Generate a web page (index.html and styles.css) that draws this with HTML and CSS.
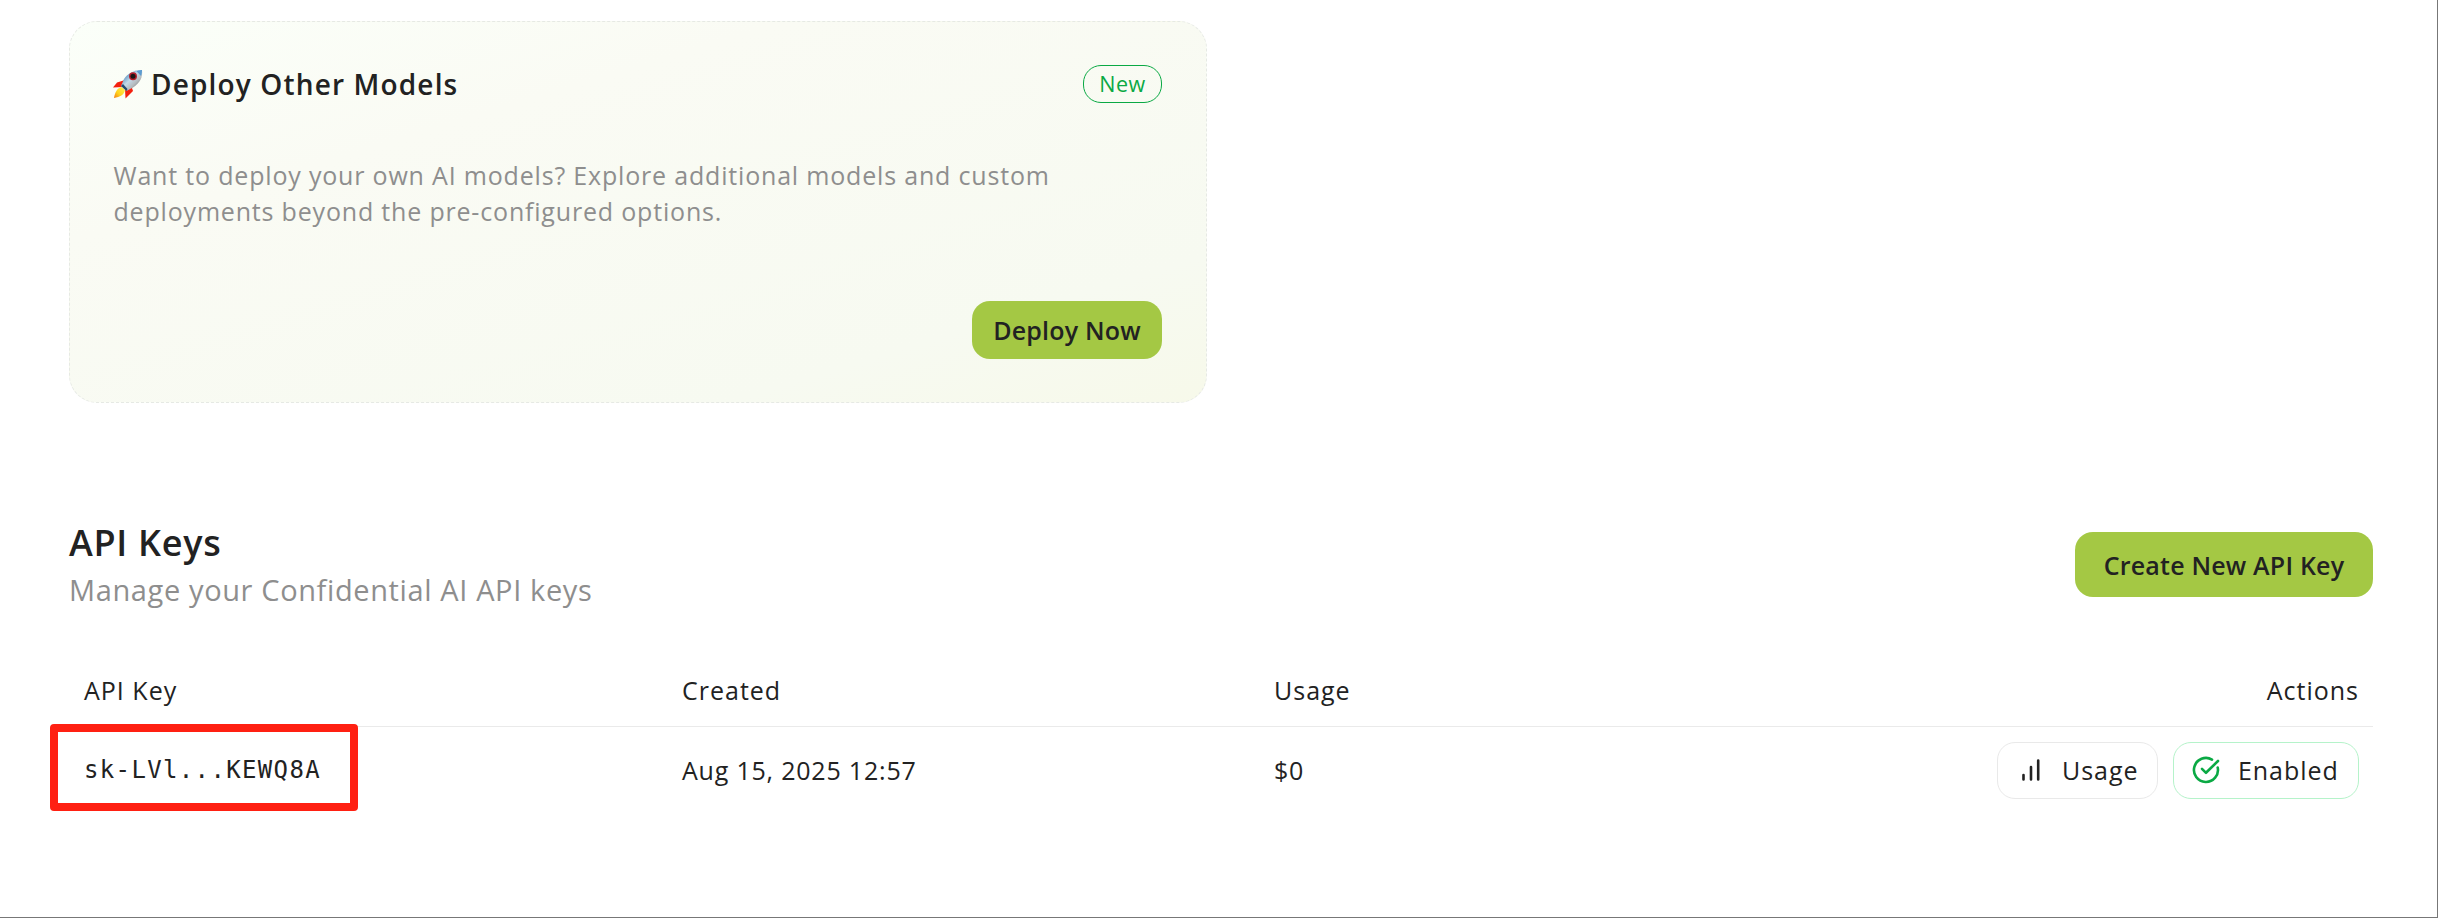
FILE: index.html
```html
<!DOCTYPE html>
<html lang="en">
<head>
<meta charset="utf-8">
<title>API Keys</title>
<link rel="stylesheet" href="styles.css">
</head>
<body>
<main class="page">
  <section class="deploy-card">
    <header class="card-head">
      <h2 class="card-title">
        <svg class="rocket" viewBox="0 0 30 30" aria-hidden="true">
          <defs>
            <linearGradient id="hull" x1="0" y1="0" x2="1" y2="1"><stop offset="0.15" stop-color="#3d7fb8"/><stop offset="0.45" stop-color="#c3d9e8"/><stop offset="0.65" stop-color="#b5babd"/><stop offset="0.9" stop-color="#596269"/></linearGradient>
            <linearGradient id="flame" x1="1" y1="0" x2="0" y2="1"><stop offset="0" stop-color="#ffef5a"/><stop offset="0.6" stop-color="#ffd21c"/><stop offset="1" stop-color="#f47a16"/></linearGradient>
          </defs>
          <path d="M12 11 4 13.500 0 18.500 10 18z" fill="#f3200f"/>
          <path d="M18 16 20 22 12.500 29.500 12 20z" fill="#f3200f"/>
          <path d="M9 18C4 19 2 23 1 29 7 28 11 26 12 21z" fill="url(#flame)"/>
          <path d="M29 1C22 0.500 15 4 11 10L8 17 13.500 22 20 18.500C27 14 30 8 29 1z" fill="url(#hull)"/>
          <path d="M8 17 13.500 22 14.500 20 10 15z" fill="#244a70"/>
          <path d="M23.500 2.200C26 1.200 28 1 29 1 29 3 28.800 5 28 7z" fill="#5b9bd0"/>
          <circle cx="20" cy="7.200" r="4" fill="#b51f2c"/>
          <circle cx="20" cy="7.200" r="2.500" fill="#1b1517"/>
        </svg>
        <span>Deploy Other Models</span>
      </h2>
      <span class="badge">New</span>
    </header>
    <p class="card-text">Want to deploy your own AI models? Explore additional models and custom<br>deployments beyond the pre-configured options.</p>
    <footer class="card-foot"><button class="btn btn-deploy">Deploy Now</button></footer>
  </section>

  <section class="keys">
    <header class="keys-head">
      <div>
        <h1 class="keys-title">API Keys</h1>
        <p class="keys-sub">Manage your Confidential AI API keys</p>
      </div>
      <button class="btn btn-create">Create New API Key</button>
    </header>
    <div class="table">
      <div class="row row-head">
        <span>API Key</span><span>Created</span><span>Usage</span><span class="right">Actions</span>
      </div>
      <div class="row row-body">
        <span class="key">sk-LVl...KEWQ8A</span>
        <span class="cell">Aug 15, 2025 12:57</span>
        <span class="cell">$0</span>
        <span class="actions">
          <button class="pill">
            <svg class="icon-bars" viewBox="0 0 18 22" aria-hidden="true"><path d="M1.500 16V20.500M9 8V20.500M16.200 1.500V20.500"/></svg>
            <span>Usage</span>
          </button>
          <button class="pill pill-on">
            <svg class="icon-check" viewBox="0 0 28 28" aria-hidden="true"><path d="M25.700 11.500A12 12 0 1 1 20 3.600M26 5 14 16.800 10 12.800"/></svg>
            <span>Enabled</span>
          </button>
        </span>
        <span class="highlight"></span>
      </div>
    </div>
  </section>
</main>
</body>
</html>
```
FILE: styles.css
```css
* { box-sizing: border-box; }
body { margin: 0; background: #fff; color: #222; font-family: "Open Sans", sans-serif; font-size: 25px; letter-spacing: 0.8px; }
h1, h2, p { margin: 0; font-weight: 400; }
button { font: inherit; letter-spacing: inherit; color: inherit; border: 0; background: none; padding: 0; }
.page { height: 918px; padding: 21px 64px 0 69px; border-right: 1px solid #777; border-bottom: 1px solid #777; overflow: hidden; }

.deploy-card { width: 1138px; height: 382px; padding: 43px 44px 43px 43px; border: 1px dashed #e6e9e4; border-radius: 28px; background: linear-gradient(163deg, #fbfff9 0%, #fafbf4 30%, #f7faf1 80%, #f7f9ea 100%); display: flex; flex-direction: column; }
.card-head { display: flex; justify-content: space-between; align-items: center; height: 38px; }
.card-title { display: flex; align-items: center; gap: 8px; font-size: 28px; line-height: 38px; font-weight: 600; letter-spacing: 1.150px; }
.rocket { width: 30px; height: 30px; }
.badge { width: 79px; height: 38px; border: 1px solid #0aa944; border-radius: 18px; color: #0aa944; font-size: 21.500px; font-weight: 500; line-height: 36px; text-align: center; letter-spacing: 0.6px; }
.card-text { margin-top: 54px; padding-left: 0.5px; color: #8e8e8e; line-height: 36px; letter-spacing: 0.815px; }
.card-foot { margin-top: auto; display: flex; justify-content: flex-end; }
.btn { background: #a4c844; border-radius: 18px; font-weight: 600; letter-spacing: 0.2px; }
.btn-deploy { width: 190px; height: 58px; }

.keys { margin-top: 117px; }
.keys-head { display: flex; justify-content: space-between; align-items: flex-start; height: 130px; }
.keys-title { font-size: 36px; font-weight: 600; line-height: 46px; letter-spacing: 0.7px; }
.keys-sub { font-size: 29px; line-height: 48px; color: #8e8e8e; letter-spacing: 0.620px; }
.btn-create { width: 298px; height: 65px; margin-top: 12px; }

.row { display: grid; grid-template-columns: 598px 592px 1fr 480px; padding: 0 14px 0 15px; align-items: center; position: relative; }
.row-head { height: 77px; padding-top: 3px; border-bottom: 1px solid #eaeaea; font-weight: 500; letter-spacing: 1px; }
.row-body { height: 88px; }
.right { text-align: right; }
.cell { padding-bottom: 2px; }
.key { padding-bottom: 2px; font-family: "DejaVu Sans Mono", monospace; font-size: 24px; letter-spacing: 1.350px; }
.actions { display: flex; justify-content: flex-end; gap: 15px; padding-bottom: 2px; }
.pill { display: flex; align-items: center; height: 57px; border: 1px solid #e9e9e9; border-radius: 18px; font-weight: 500; width: 161px; padding-left: 24px; gap: 22px; letter-spacing: 0.950px; }
.pill-on { width: 186px; border-color: #b5f3ca; padding-left: 18px; gap: 18px; }
.icon-bars { width: 18px; height: 22px; fill: none; stroke: #222; stroke-width: 2.600; stroke-linecap: round; }
.icon-check { width: 28px; height: 28px; fill: none; stroke: #0aa944; stroke-width: 2.600; stroke-linecap: round; stroke-linejoin: round; }
.highlight { position: absolute; left: -19px; top: -3px; width: 308px; height: 87px; border: 8px solid #ff2012; border-radius: 4px; }
```
